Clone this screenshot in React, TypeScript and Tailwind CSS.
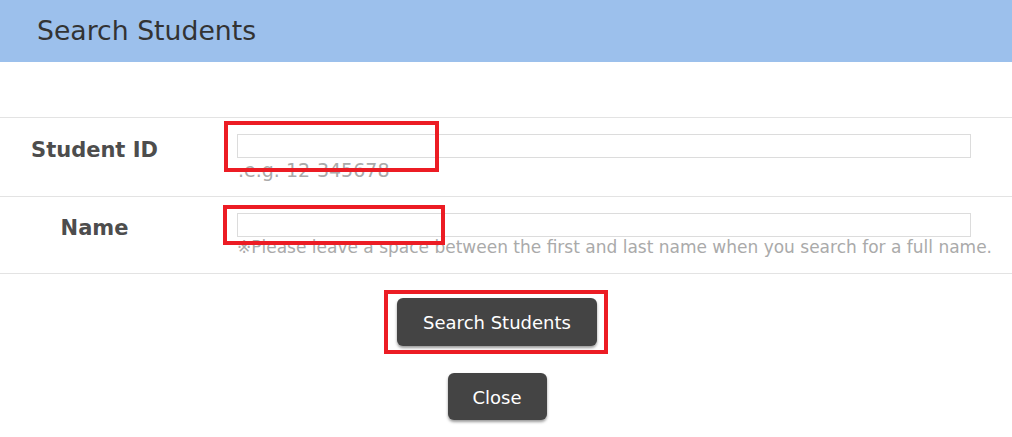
const font = { fontFamily: '"DejaVu Sans", Verdana, sans-serif' };

const Mark = ({ className }: { className: string }) => (
	<div className={`absolute border-[4px] border-[#ec1c24] pointer-events-none ${className}`} />
);

export default function App() {
	return (
		<div className="relative w-[1012px] h-[437px] bg-white overflow-hidden" style={font}>
			<header className="h-[62px] bg-[#9cc0ec] flex items-center pl-[37px] pt-[1px]">
				<h1 className="text-[26.7px] text-[#333] leading-none">Search Students</h1>
			</header>

			<div className="mt-[55px] border-b border-[#e3e3e3]">
				<div className="flex h-[79px] border-t border-[#e3e3e3]">
					<div className="w-[189px] pt-[19px] text-center text-[21px] leading-[26px] font-bold text-[#4d4d4d]">
						Student ID
					</div>
					<div className="flex-1 pl-[48px] pr-[41px] pt-[16px]">
						<input className="block w-full h-[24px] border border-[#dcdcdc] bg-white outline-none" />
						<p className="mt-[1px] text-[19px] leading-[22px] text-[#aaa] pl-[1px] whitespace-nowrap">.e.g. 12-345678</p>
					</div>
				</div>
				<div className="flex h-[77px] border-t border-[#e3e3e3]">
					<div className="w-[189px] pt-[18px] text-center text-[21px] leading-[26px] font-bold text-[#4d4d4d]">
						Name
					</div>
					<div className="flex-1 pl-[48px] pr-[16px] pt-[16px]">
						<input className="block w-[734px] h-[24px] border border-[#dcdcdc] bg-white outline-none" />
						<p className="text-[17px] leading-[20px] text-[#aaa] whitespace-nowrap">
							※Please leave a space between the first and last name when you search for a full name.
						</p>
					</div>
				</div>
			</div>

			<div className="flex flex-col items-center pt-[24px] pr-[18px]">
				<button className="w-[200px] h-[48px] rounded-[6px] bg-[#444] text-white text-[18px] pt-[1px] shadow-[0_2px_3px_rgba(0,0,0,0.4)]">
					Search Students
				</button>
				<button className="mt-[27px] w-[99px] h-[47px] rounded-[6px] bg-[#444] text-white text-[18px] pt-[1px] shadow-[0_2px_3px_rgba(0,0,0,0.4)]">
					Close
				</button>
			</div>

			<Mark className="left-[224px] top-[121px] w-[215px] h-[51px]" />
			<Mark className="left-[223px] top-[205px] w-[222px] h-[40px]" />
			<Mark className="left-[384px] top-[290px] w-[224px] h-[64px]" />
		</div>
	);
}
